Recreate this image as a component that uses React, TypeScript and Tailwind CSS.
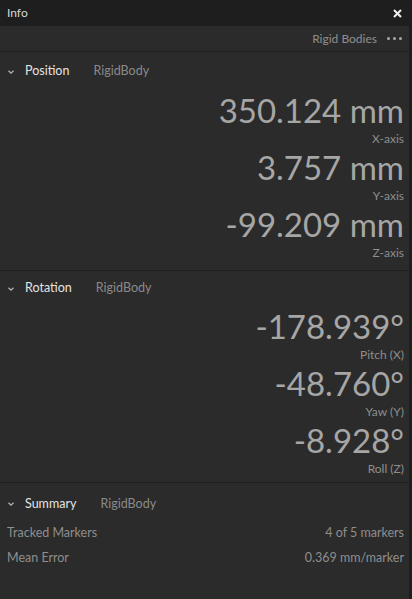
import React from "react";

type Value = { value: string; label: string };

const position: Value[] = [
  { value: "350.124 mm", label: "X-axis" },
  { value: "3.757 mm", label: "Y-axis" },
  { value: "-99.209 mm", label: "Z-axis" },
];

const rotation: Value[] = [
  { value: "-178.939°", label: "Pitch (X)" },
  { value: "-48.760°", label: "Yaw (Y)" },
  { value: "-8.928°", label: "Roll (Z)" },
];

function Chevron() {
  return (
    <svg width="8" height="6" viewBox="0 0 8 6" className="shrink-0">
      <path d="M1.5 1.8 L4 4.2 L6.5 1.8" fill="none" stroke="#b5b5b5" strokeWidth="1.3" />
    </svg>
  );
}

function SectionHeader({ title, className }: { title: string; className: string }) {
  return (
    <div className={`flex items-center pl-[7px] ${className}`}>
      <Chevron />
      <span className="ml-[10px] text-[12.5px] text-[#e4e4e4]">{title}</span>
      <span className="ml-[24px] text-[12.5px] text-[#8a8a8a]">RigidBody</span>
    </div>
  );
}

function BigValue({ v }: { v: Value }) {
  return (
    <div className="flex flex-col items-end pr-[5px]">
      <div className="h-[40px] leading-[40px] text-[33px] text-[#a6a6a6] whitespace-nowrap">{v.value}</div>
      <div className="h-[17px] leading-[17px] text-[12px] text-[#8e8e8e]">{v.label}</div>
    </div>
  );
}

export default function App() {
  return (
    <div className="w-[412px] h-[599px] bg-[#1e1e1e] font-['Lato',sans-serif] flex flex-col overflow-hidden">
      {/* Title bar */}
      <div className="h-[26px] shrink-0 flex items-center justify-between pl-[7px] pr-[10px]">
        <span className="text-[12px] text-[#d6d6d6]">Info</span>
        <svg width="9" height="9" viewBox="0 0 9 9">
          <path d="M1 1 L8 8 M8 1 L1 8" stroke="#f0f0f0" strokeWidth="2" />
        </svg>
      </div>

      <div className="flex-1 flex">
        <div className="w-[409px] bg-[#2b2b2b] flex flex-col">
          {/* Toolbar */}
          <div className="h-[26px] flex items-center justify-end pr-[7px] border-b border-[#1f1f1f]">
            <span className="text-[12px] text-[#8f8f8f]">Rigid Bodies</span>
            <div className="ml-[10px] flex gap-[3px]">
              <span className="w-[3px] h-[3px] rounded-full bg-[#a8a8a8]" />
              <span className="w-[3px] h-[3px] rounded-full bg-[#a8a8a8]" />
              <span className="w-[3px] h-[3px] rounded-full bg-[#a8a8a8]" />
            </div>
          </div>

          {/* Position */}
          <div className="pb-[9px] border-b border-[#1f1f1f]">
            <SectionHeader title="Position" className="h-[38px] pt-[1px]" />
            {position.map((v) => (
              <BigValue key={v.label} v={v} />
            ))}
          </div>

          {/* Rotation */}
          <div className="pb-[5px] border-b border-[#1f1f1f]">
            <SectionHeader title="Rotation" className="h-[35px]" />
            {rotation.map((v) => (
              <BigValue key={v.label} v={v} />
            ))}
          </div>

          {/* Summary */}
          <div>
            <SectionHeader title="Summary" className="h-[38px] pt-[4px]" />
            <div className="flex items-center justify-between h-[25px] pl-[7px] pr-[5px] text-[12.5px] text-[#8e8e8e]">
              <span>Tracked Markers</span>
              <span>4 of 5 markers</span>
            </div>
            <div className="flex items-center justify-between h-[25px] pl-[7px] pr-[5px] text-[12.5px] text-[#8e8e8e]">
              <span>Mean Error</span>
              <span>0.369 mm/marker</span>
            </div>
          </div>
        </div>
        <div className="flex-1 bg-[#1e1e1e]" />
      </div>
    </div>
  );
}
